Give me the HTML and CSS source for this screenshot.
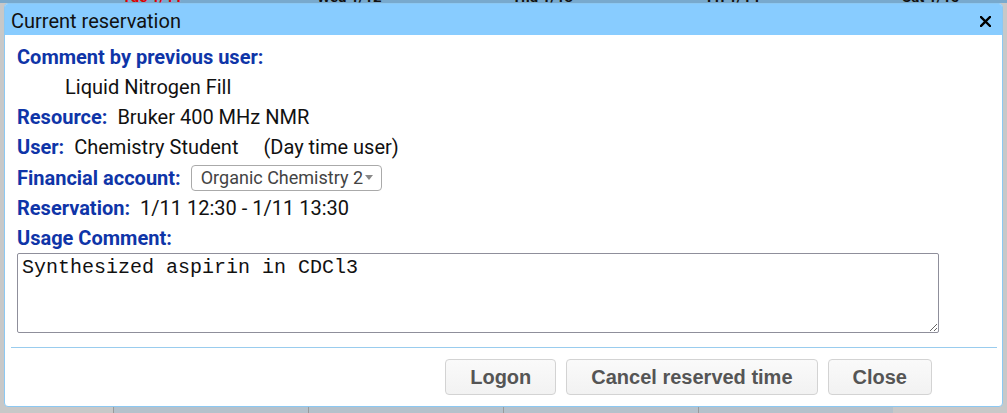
FILE: index.html
```html
<!DOCTYPE html>
<html>
<head>
<meta charset="utf-8">
<title>Current reservation</title>
<link rel="stylesheet" href="styles.css">
</head>
<body>
<div class="calendar">
  <div class="cal-head">
    <div class="cal-hcell"></div>
    <div class="cal-hcell today"><span>Tue 1/11</span></div>
    <div class="cal-hcell"><span>Wed 1/12</span></div>
    <div class="cal-hcell"><span>Thu 1/13</span></div>
    <div class="cal-hcell"><span>Fri 1/14</span></div>
    <div class="cal-hcell"><span>Sat 1/15</span></div>
  </div>
  <div class="cal-body">
    <div class="cal-col time"></div>
    <div class="cal-col day"></div>
    <div class="cal-col day"></div>
    <div class="cal-col day"></div>
    <div class="cal-col day"></div>
    <div class="cal-col off"></div>
  </div>
</div>

<div class="dialog">
  <div class="titlebar">
    <span class="title">Current reservation</span>
    <span class="close-x">
      <svg width="11" height="11" viewBox="0 0 11 11"><path d="M1 1 L10 10 M10 1 L1 10" stroke="#000" stroke-width="2.4" stroke-linecap="square" fill="none"/></svg>
    </span>
  </div>
  <div class="content">
    <div class="row"><span class="label">Comment by previous user:</span></div>
    <div class="row indent">Liquid Nitrogen Fill</div>
    <div class="row"><span class="label">Resource:</span>Bruker 400 MHz NMR</div>
    <div class="row"><span class="label">User:</span>Chemistry Student<span class="usertype">(Day time user)</span></div>
    <div class="row select-row"><span class="label">Financial account:</span>
      <div class="select"><span>Organic Chemistry 2</span><span class="arrow"></span></div>
    </div>
    <div class="row"><span class="label">Reservation:</span>1/11 12:30 - 1/11 13:30</div>
    <div class="row"><span class="label">Usage Comment:</span></div>
    <textarea class="comment">Synthesized aspirin in CDCl3</textarea>
  </div>
  <div class="separator"></div>
  <div class="buttonpane">
    <button class="btn">Logon</button>
    <button class="btn">Cancel reserved time</button>
    <button class="btn">Close</button>
  </div>
</div>
</body>
</html>
```
FILE: styles.css
```css
html, body {
  margin: 0;
  padding: 0;
}
body {
  width: 1007px;
  height: 413px;
  overflow: hidden;
  background: #c8c8c8;
  font-family: Roboto, "Liberation Sans", Arial, sans-serif;
  position: relative;
}

/* background calendar */
.calendar {
  display: flex;
  flex-direction: column;
  height: 413px;
}
.cal-head {
  display: grid;
  grid-template-columns: 113px 195px 195px 195px 195px 114px;
  height: 3px;
  overflow: hidden;
  background: #78a9cd;
}
.cal-hcell span {
  display: block;
  margin-top: -11px;
  padding-left: 9px;
  font-size: 15px;
  line-height: 16px;
  font-weight: bold;
  color: #111;
  white-space: nowrap;
}
.cal-hcell.today span {
  color: #e00000;
}
.cal-body {
  flex: 1;
  display: grid;
  grid-template-columns: 113px 195px 195px 195px 195px 114px;
}
.cal-col.time { background: #c8c8c8; }
.cal-col.day { background: #b5c1cb; border-left: 1px solid #9a9a9a; }
.cal-col.off { background: #c8c8c8; }

/* dialog */
.dialog {
  position: absolute;
  left: 4px;
  top: 3px;
  width: 999px;
  height: 404px;
  box-sizing: border-box;
  background: #fff;
  border: 1px solid #8cc8f2;
  border-radius: 4px;
  display: flex;
  flex-direction: column;
  overflow: hidden;
}
.titlebar {
  height: 31px;
  background: #88ccff;
  display: flex;
  align-items: center;
  justify-content: space-between;
  padding: 0 11px 0 6px;
  flex-shrink: 0;
}
.title {
  font-size: 20px;
  color: #111;
  padding-top: 2px;
}
.close-x {
  display: flex;
  padding-top: 4px;
}
.content {
  padding: 7px 0 0 12px;
}
.row {
  height: 30px;
  display: flex;
  align-items: center;
  font-size: 20px;
  color: #111;
  white-space: nowrap;
}
.row.select-row {
  height: 31px;
}
.row.indent {
  padding-left: 48px;
}
.label {
  color: #0f35a8;
  font-weight: bold;
  margin-right: 10px;
}
.usertype {
  margin-left: 25px;
}
.select {
  width: 191px;
  height: 26px;
  box-sizing: border-box;
  border: 1px solid #aaa;
  border-radius: 4px;
  display: flex;
  align-items: center;
  justify-content: space-between;
  padding: 0 8px 0 9px;
  font-size: 18px;
  color: #444;
}
.arrow {
  width: 0;
  height: 0;
  border-left: 4px solid transparent;
  border-right: 4px solid transparent;
  border-top: 5px solid #888;
}
.comment {
  display: block;
  width: 922px;
  height: 80px;
  box-sizing: border-box;
  margin: 0;
  border: 1px solid #8f8f9b;
  border-radius: 2px;
  padding: 3px 2px 3px 4px;
  font-family: "Liberation Mono", "Courier New", monospace;
  font-size: 20px;
  line-height: 22px;
  color: #111;
  resize: both;
}
.separator {
  height: 1px;
  background: #99ccee;
  margin: 14px 5px 0 6px;
  flex-shrink: 0;
}
.buttonpane {
  display: flex;
  justify-content: flex-end;
  gap: 10px;
  padding: 11px 70px 0 0;
}
.btn {
  height: 36px;
  box-sizing: border-box;
  padding: 0 24px;
  border: 1px solid #d3d3d3;
  border-radius: 4px;
  background: linear-gradient(#fafafa, #f2f2f2);
  color: #555;
  font-family: "Liberation Sans", Arial, sans-serif;
  font-weight: bold;
  font-size: 20px;
}
```
